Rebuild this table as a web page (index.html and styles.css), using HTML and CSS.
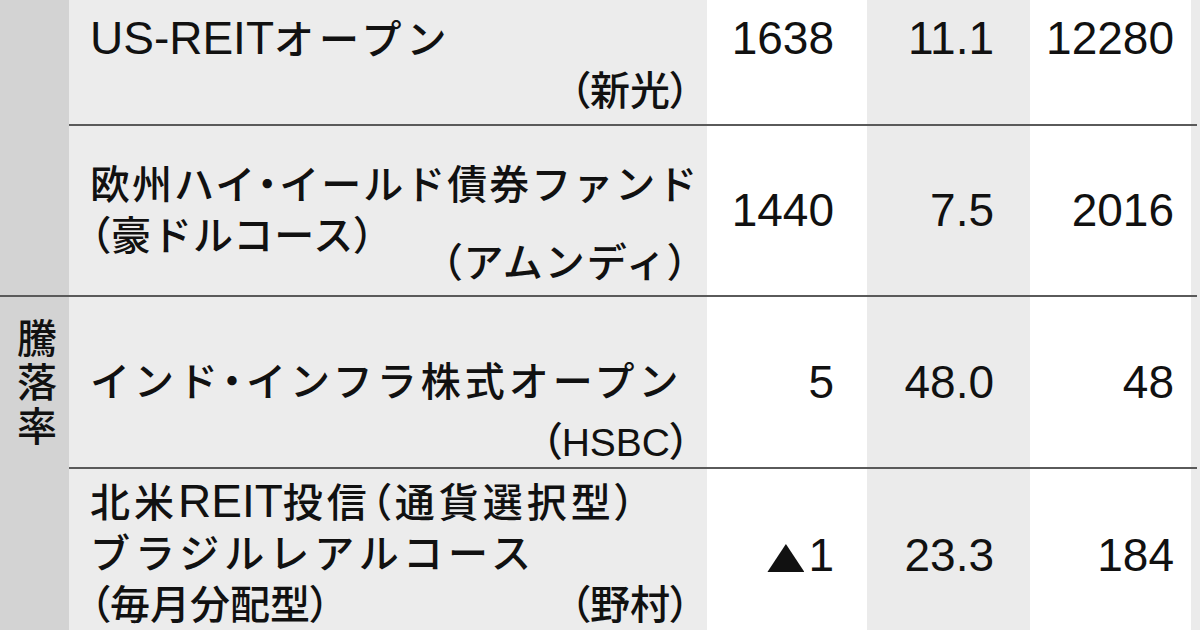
FILE: index.html
```html
<!DOCTYPE html>
<html lang="ja">
<head>
<meta charset="utf-8">
<title>騰落率</title>
<link rel="stylesheet" href="styles.css">
</head>
<body>
<div class="sheet">
  <section class="group">
    <div class="label"></div>
    <div class="rows">
      <div class="row row-1">
        <div class="name">
          <div class="line ls5"><span class="lat">US-REIT</span>オープン</div>
          <div class="line right"><span class="pp">（</span>新光<span class="pp">）</span></div>
        </div>
        <div class="num c2 top">1638</div>
        <div class="num c3 top">11.1</div>
        <div class="num c4 top">12280</div>
        <div class="edge"></div>
      </div>
      <div class="row row-2">
        <div class="name">
          <div class="line ls2">欧州ハイ<span class="pp">・</span>イールド債券ファンド</div>
          <div class="line ls1"><span class="pp">（</span>豪ドルコース<span class="pp">）</span></div>
          <div class="line ls2 right company-raised"><span class="pp">（</span>アムンディ<span class="pp">）</span></div>
        </div>
        <div class="num c2">1440</div>
        <div class="num c3">7.5</div>
        <div class="num c4">2016</div>
        <div class="edge"></div>
      </div>
    </div>
  </section>
  <section class="group">
    <div class="label"><span class="label-text">騰落率</span></div>
    <div class="rows">
      <div class="row row-3">
        <div class="name">
          <div class="line ls4">インド<span class="pp">・</span>インフラ株式オープン</div>
          <div class="line right company-low"><span class="pp">（</span><span class="lat small">HSBC</span><span class="pp">）</span></div>
        </div>
        <div class="num c2">5</div>
        <div class="num c3">48.0</div>
        <div class="num c4">48</div>
        <div class="edge"></div>
      </div>
      <div class="row row-4">
        <div class="name">
          <div class="line ls4">北米<span class="lat">REIT</span>投信<span class="pp">（</span>通貨選択型<span class="pp">）</span></div>
          <div class="line ls5">ブラジルレアルコース</div>
          <div class="line split"><span><span class="pp">（</span>毎月分配型<span class="pp">）</span></span><span><span class="pp">（</span>野村<span class="pp">）</span></span></div>
        </div>
        <div class="num c2"><span class="tri"></span>1</div>
        <div class="num c3">23.3</div>
        <div class="num c4">184</div>
        <div class="edge"></div>
      </div>
    </div>
  </section>
</div>
</body>
</html>
```

FILE: styles.css
```css
html, body {
  margin: 0;
  padding: 0;
}

body {
  width: 1200px;
  height: 630px;
  overflow: hidden;
  background: #ebebeb;
  color: #111111;
  font-family: "Noto Sans CJK JP", "Liberation Sans", sans-serif;
  font-weight: 500;
}

.sheet {
  width: 1197px;
}

.group {
  display: flex;
  border-bottom: 2px solid #5a5a5a;
}

.label {
  width: 69px;
  flex: none;
  background: #d3d3d3;
  display: flex;
  justify-content: center;
  align-items: flex-start;
  padding-left: 5px;
  box-sizing: border-box;
}

.label-text {
  writing-mode: vertical-rl;
  font-size: 40px;
  line-height: 40px;
  letter-spacing: 4px;
  margin-top: 21px;
}

.rows {
  flex: 1;
  display: flex;
  flex-direction: column;
}

.row {
  display: grid;
  grid-template-columns: 638px 160px 163px 161px 6px;
}

.row + .row {
  border-top: 2px solid #5a5a5a;
}

.row-1 { height: 124px; }
.row-2 { height: 169px; }
.row-3 { height: 170px; }
.row-4 { height: 172px; }

.name {
  background: #ececec;
  padding: 0 17px 0 21px;
  font-size: 40px;
}

.row-1 .name { padding-top: 12px; }
.row-2 .name { padding-top: 31px; }
.row-3 .name { padding-top: 57px; }
.row-4 .name { padding-top: 6px; }

.line {
  height: 51px;
  line-height: 51px;
  white-space: nowrap;
}

.ls1 { letter-spacing: 1px; }
.ls2 { letter-spacing: 2px; }
.ls3 { letter-spacing: 3px; }
.ls4 { letter-spacing: 4px; }
.ls5 { letter-spacing: 5px; }

.pp {
  font-feature-settings: "palt";
}

.right {
  text-align: right;
}

.split {
  display: flex;
  justify-content: space-between;
}

.company-raised {
  margin-top: -24px;
}

.company-low {
  margin-top: 9px;
}

.lat {
  font-family: "Liberation Sans", sans-serif;
  font-weight: 400;
  font-size: 46px;
  letter-spacing: 0;
}

.lat.small {
  font-size: 39px;
}

.num {
  font-family: "Liberation Sans", sans-serif;
  font-weight: 400;
  font-size: 46px;
  line-height: 51px;
  white-space: nowrap;
  display: flex;
  align-items: center;
  justify-content: flex-end;
}

.num.top {
  align-items: flex-start;
  padding-top: 13px;
}

.c2 {
  background: #ffffff;
  padding-right: 33px;
}

.c3 {
  background: #ebebeb;
  padding-right: 36px;
}

.c4 {
  background: #ffffff;
  padding-right: 17px;
}

.edge {
  background: #ebebeb;
}

.tri {
  display: inline-block;
  width: 37px;
  height: 28px;
  background: #111111;
  clip-path: polygon(50% 0, 100% 100%, 0 100%);
  margin-right: 4px;
  margin-top: 6px;
}
```
